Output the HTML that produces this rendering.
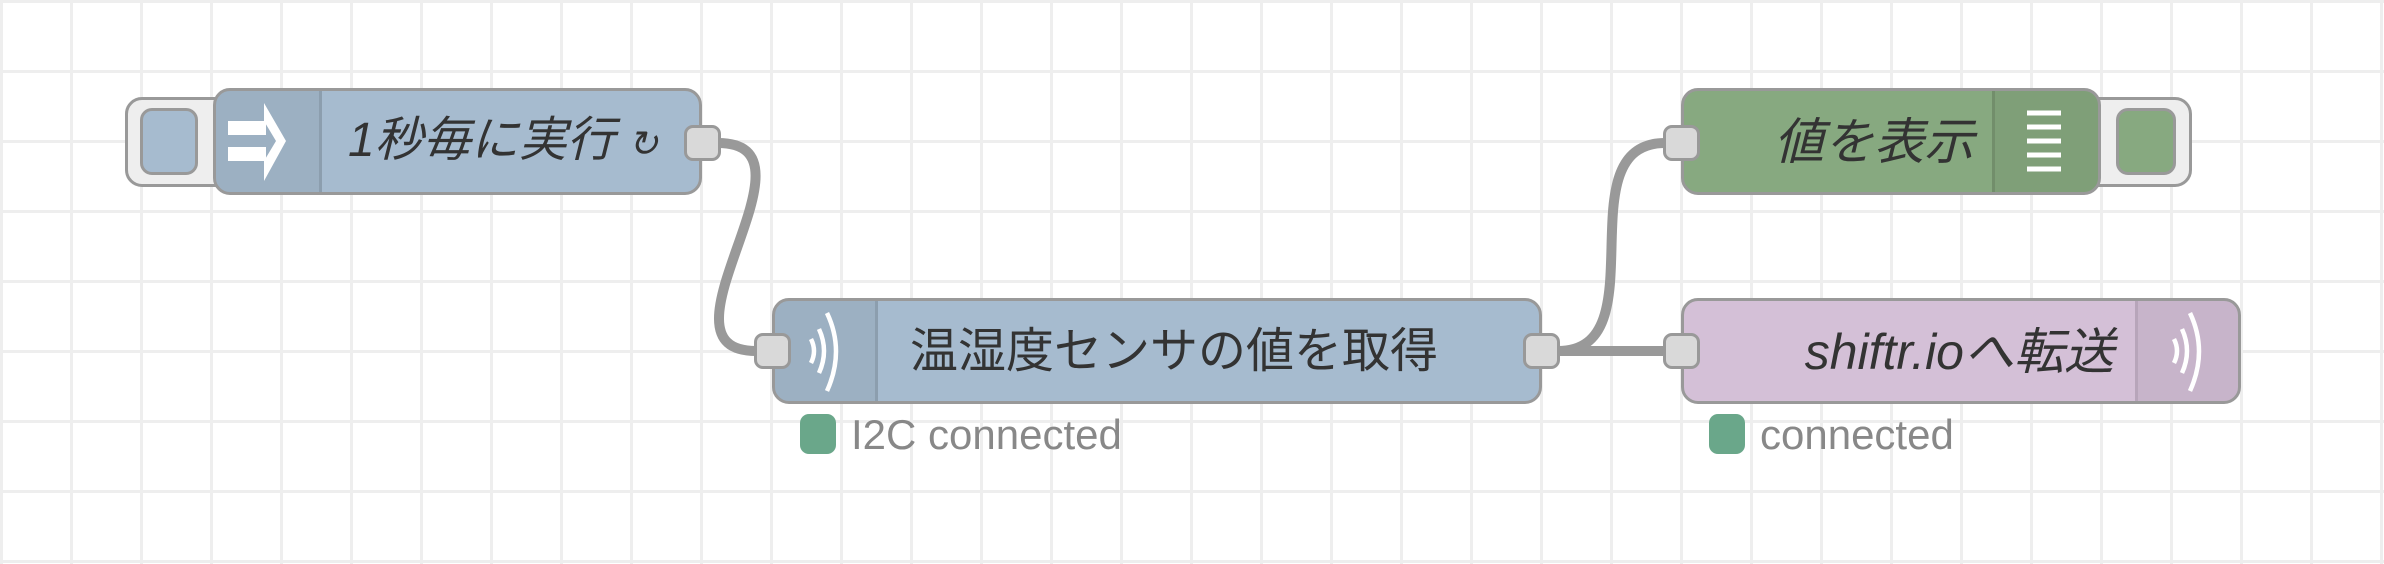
<!DOCTYPE html>
<html><head><meta charset="utf-8"><style>
html,body{margin:0;padding:0}
body{width:2384px;height:564px;overflow:hidden;background:#fff;
background-image:linear-gradient(to right,#eee 3px,transparent 3px),linear-gradient(to bottom,#eee 3px,transparent 3px);
background-size:70px 70px;background-position:0px 0px;position:relative;font-family:"Liberation Sans","Noto Sans CJK JP",sans-serif}
.n{position:absolute;border:3px solid #999;border-radius:17px;box-sizing:border-box;overflow:hidden}
.ic{position:absolute;top:0;bottom:0;background:rgba(0,0,0,0.06)}
.p{position:absolute;width:37px;height:36px;background:#d9d9d9;border:3px solid #999;border-radius:9px;box-sizing:border-box}
.t{position:absolute;color:#333;font-size:48px;white-space:nowrap;line-height:1}
.b{position:absolute;border:3px solid #999;background:#eee;box-sizing:border-box}
.bi{position:absolute;border:3px solid #999;border-radius:12px;box-sizing:border-box}
.st{position:absolute;width:36px;height:40px;background:#6aa78a;border-radius:9px}
.sl{position:absolute;color:#888;font-size:42px;line-height:1}
svg{position:absolute;left:0;top:0}
</style></head><body>
<svg width="2384" height="564"><g fill="none" stroke="#999" stroke-width="10">
<path d="M718 143 C 830 143, 645 351, 756 351"/>
<path d="M1558 351 C 1660 351, 1563 143, 1665 143"/>
<path d="M1558 351 L 1665 351"/>
</g></svg>

<!-- inject -->
<div class="b" style="left:125px;top:97px;width:110px;height:90px;border-radius:17px 0 0 17px"></div>
<div class="bi" style="left:140px;top:108px;width:58px;height:67px;background:#a6bbcf"></div>
<div class="n" style="left:213px;top:88px;width:489px;height:107px;background:#a6bbcf">
 <div class="ic" style="left:0;width:103px;border-right:3px solid rgba(0,0,0,0.1)">
  <svg width="103" height="101" viewBox="0 0 103 101"><path fill="#fff" d="M12 30 H50 V44 H12 Z M12 56 H50 V70 H12 Z"/><path fill="#fff" d="M48 12 L70 50 L48 90 L48 70 L60 50 L48 30 Z"/></svg>
 </div>
 <div class="t" style="left:132px;top:26px;font-style:italic">1秒毎に実行 <span style="font-size:36px">↻</span></div>
</div>
<div class="p" style="left:684px;top:125px"></div>

<!-- sensor -->
<div class="n" style="left:772px;top:298px;width:770px;height:106px;background:#a6bbcf">
 <div class="ic" style="left:0;width:100px;border-right:3px solid rgba(0,0,0,0.1)">
  <svg width="100" height="100" viewBox="0 0 100 100"><g fill="none" stroke="#fff" stroke-width="4.5"><path d="M36 38 Q42 50 36 62"/><path d="M44 28 Q54 50 44 72"/><path d="M52 12 Q70 50 52 90"/></g></svg>
 </div>
 <div class="t" style="left:135px;top:27px;font-size:48px">温湿度センサの値を取得</div>
</div>
<div class="p" style="left:754px;top:333px"></div>
<div class="p" style="left:1523px;top:333px"></div>
<div class="st" style="left:800px;top:414px"></div>
<div class="sl" style="left:851px;top:414px">I2C connected</div>

<!-- debug -->
<div class="b" style="left:2080px;top:97px;width:112px;height:90px;border-radius:0 17px 17px 0"></div>
<div class="bi" style="left:2116px;top:108px;width:60px;height:67px;background:#87a980"></div>
<div class="n" style="left:1681px;top:88px;width:420px;height:107px;background:#87a980">
 <div class="ic" style="right:0;width:103px;border-left:3px solid rgba(0,0,0,0.1)">
  <svg width="103" height="101" viewBox="0 0 103 101"><g stroke="#fff" stroke-width="5"><path d="M32 22H66M32 36H66M32 50H66M32 64H66M32 78H66"/></g></svg>
 </div>
 <div class="t" style="right:124px;top:26px;font-style:italic;font-size:50px">値を表示</div>
</div>
<div class="p" style="left:1663px;top:125px"></div>

<!-- shiftr -->
<div class="n" style="left:1681px;top:298px;width:560px;height:106px;background:#d4c0d7">
 <div class="ic" style="right:0;width:100px;border-left:3px solid rgba(0,0,0,0.08)">
  <svg width="100" height="100" viewBox="0 0 100 100"><g fill="none" stroke="#fff" stroke-width="4.5"><path d="M36 38 Q42 50 36 62"/><path d="M44 28 Q54 50 44 72"/><path d="M52 12 Q70 50 52 90"/></g></svg>
 </div>
 <div class="t" style="right:124px;top:26px;font-style:italic;font-size:50px">shiftr.ioへ転送</div>
</div>
<div class="p" style="left:1663px;top:333px"></div>
<div class="st" style="left:1709px;top:414px"></div>
<div class="sl" style="left:1760px;top:414px">connected</div>
</body></html>
